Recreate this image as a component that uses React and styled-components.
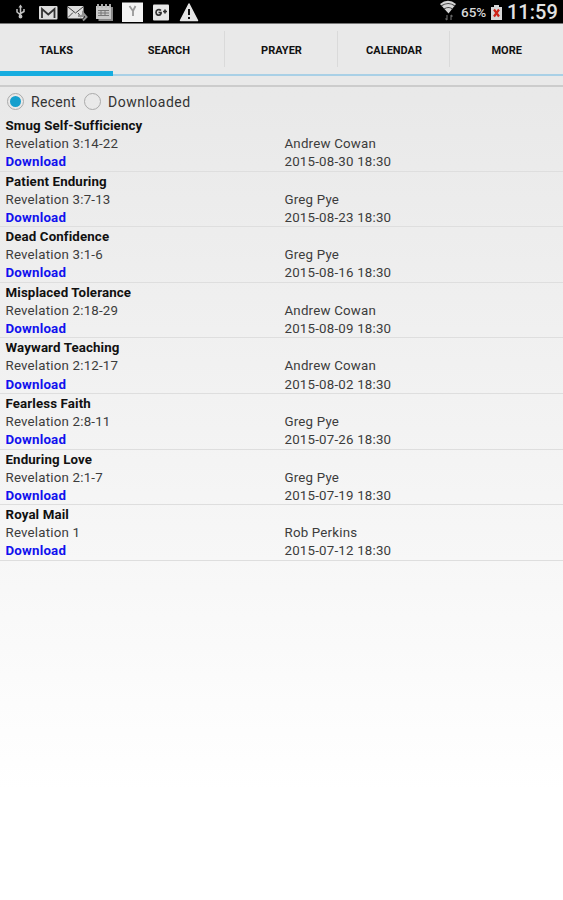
import React from 'react';
import styled, { createGlobalStyle } from 'styled-components';

const GlobalStyle = createGlobalStyle`
* {
  box-sizing: border-box;
}
body {
  margin: 0;
  font-family: Roboto, "Liberation Sans", sans-serif;
  font-variant-ligatures: none;
  background: #ffffff;
}
`;

const Screen = styled.div`
height: 900px;
overflow: hidden;
display: flex;
flex-direction: column;
background: linear-gradient(#e8e8e8 0px, #e9e9e9 100px, #f7f7f7 560px, #ffffff 790px);
`;

const StatusBar = styled.header`
display: flex;
justify-content: space-between;
height: 24px;
flex: none;
background: #000000;
border-bottom: 1px solid #777777;
`;

const StatusGroup = styled.div`
display: flex;
align-items: center;
`;

const StatusIcon = styled.svg`
display: block;
flex: none;
width: ${props => props.$width}px;
height: 24px;
`;

const Battery = styled.span`
width: 29px;
color: #d8d8d8;
font-size: 13.5px;
font-weight: 500;
line-height: 24px;
padding-top: 1px;
`;

const Clock = styled.span`
width: 60px;
padding-left: 4px;
color: #e2e2e2;
font-size: 20px;
font-weight: 500;
line-height: 24px;
`;

const TabBar = styled.nav`
display: flex;
height: 63px;
flex: none;
padding-bottom: 9px;
background: #e9e9e9;
border-bottom: 2px solid #cccccc;
`;

const Tab = styled.div`
flex: 1;
display: flex;
align-items: center;
justify-content: center;
position: relative;
padding-top: 5px;
color: #111111;
font-size: 11px;
font-weight: 700;
border-bottom: ${props => (props.$active ? '5px solid #17ade0' : '2px solid #a9d0e6')};
padding-bottom: ${props => (props.$active ? 0 : 3)}px;

& + &::before {
  content: '';
  position: absolute;
  left: -1px;
  top: 7px;
  width: 1px;
  height: 36px;
  background: #dadada;
}
`;

const Filters = styled.div`
display: flex;
align-items: center;
height: 29px;
flex: none;
padding-left: 7px;
color: #333333;
font-size: 14px;
`;

const Radio = styled.span`
display: flex;
align-items: center;
justify-content: center;
width: 17px;
height: 17px;
border: 1px solid #aaaaaa;
border-radius: 50%;

&::after {
  content: '';
  width: 11px;
  height: 11px;
  border-radius: 50%;
  background: ${props => (props.$checked ? '#149fcd' : 'transparent')};
}
`;

const FilterLabel = styled.span`
width: ${props => props.$width}px;
padding-left: 7px;
letter-spacing: ${props => props.$spacing}px;
white-space: nowrap;
`;

const TalkRow = styled.article`
height: 55.6px;
flex: none;
padding: 1px 0 0 5.5px;
border-bottom: 1px solid #dedede;
color: #3c3c3c;
font-size: 13.3px;
line-height: 18.1px;
`;

const Title = styled.div`
color: #111111;
font-weight: 700;
letter-spacing: 0.12px;
`;

const Line = styled.div`
display: grid;
grid-template-columns: 279px 1fr;
letter-spacing: 0.2px;
`;

const Download = styled.span`
color: #1111ee;
font-weight: 700;
letter-spacing: 0.2px;
`;

const tabs = ['TALKS', 'SEARCH', 'PRAYER', 'CALENDAR', 'MORE'];

const talks = [
  { title: 'Smug Self-Sufficiency', passage: 'Revelation 3:14-22', speaker: 'Andrew Cowan', date: '2015-08-30 18:30' },
  { title: 'Patient Enduring', passage: 'Revelation 3:7-13', speaker: 'Greg Pye', date: '2015-08-23 18:30' },
  { title: 'Dead Confidence', passage: 'Revelation 3:1-6', speaker: 'Greg Pye', date: '2015-08-16 18:30' },
  { title: 'Misplaced Tolerance', passage: 'Revelation 2:18-29', speaker: 'Andrew Cowan', date: '2015-08-09 18:30' },
  { title: 'Wayward Teaching', passage: 'Revelation 2:12-17', speaker: 'Andrew Cowan', date: '2015-08-02 18:30' },
  { title: 'Fearless Faith', passage: 'Revelation 2:8-11', speaker: 'Greg Pye', date: '2015-07-26 18:30' },
  { title: 'Enduring Love', passage: 'Revelation 2:1-7', speaker: 'Greg Pye', date: '2015-07-19 18:30' },
  { title: 'Royal Mail', passage: 'Revelation 1', speaker: 'Rob Perkins', date: '2015-07-12 18:30' },
];

function Notifications() {
  return (
    <StatusIcon $width={210} viewBox="0 0 210 24" fill="none">
      {/* usb */}
      <g stroke="#c4c4c4" strokeWidth="1.5">
        <path d="M20.500 7v10M17 9v3l3.500 3M24 9v2.500l-3.500 2" />
        <circle cx="20.500" cy="16.500" r="1.200" fill="#c4c4c4" />
        <path d="M20.500 4.500l-2 3h4z" fill="#c4c4c4" stroke="none" />
      </g>
      {/* gmail */}
      <rect x="39" y="6" width="18.500" height="13.500" rx="1" fill="#dedede" />
      <path d="M42 18V9l6.300 5.500 6.200-5.500V18" stroke="#333333" strokeWidth="1.800" />
      {/* mail */}
      <rect x="67.500" y="6" width="16" height="12.500" rx="1" fill="#dedede" />
      <path d="M68 7l7.500 6L83 7M68 17.500l5-5M81 17l-3-4" stroke="#444444" />
      <path d="M78 16h5v-3l3.500 4-3.500 3.500M84 14l-4 3" stroke="#929292" strokeWidth="2" />
      {/* calendar */}
      <path d="M98.500 7h14.500v14H98.500z" fill="#888888" />
      <path d="M96 6h15v13H96z" fill="#c9c9c9" />
      <path d="M98 4v4M102 4v4M106 4v4M110 4v4" stroke="#bbbbbb" strokeWidth="1.800" />
      <path d="M98 10.500h11M98 13h11M98 15.500h11M101 10v6M105 10v6" stroke="#777777" />
      {/* app */}
      <path d="M122 2.500h21V22h-21z" fill="#f3f3f3" />
      <path d="M129.500 6l3.500 5 2.500-5M133 11v5" stroke="#999999" strokeWidth="1.800" />
      {/* google plus */}
      <rect x="153" y="4.500" width="16" height="16" rx="1" fill="#e8e8e8" />
      <path d="M161 10.500c-2-2-5-.5-5 2s3.500 4 5 1v-1h-2.500M163 11.500h4M165 9.500v4" stroke="#333333" strokeWidth="1.700" />
      {/* warning */}
      <path d="M189 4l8.500 16.500h-17z" fill="#e5e5e5" stroke="#e5e5e5" strokeWidth="1.500" strokeLinejoin="round" />
      <path d="M189 9v6M189 17v2" stroke="#111111" strokeWidth="2" />
    </StatusIcon>
  );
}

function WifiIcon() {
  return (
    <StatusIcon $width={21} viewBox="0 0 21 24" fill="none">
      <path d="M0 4q8-6.500 16 0L8.500 13.500z" fill="#d6d6d6" />
      <path d="M1 6q7.500-5 14 0M4 9q4.500-3 8.500 0" stroke="#444444" strokeWidth="1.100" />
      <path d="M7 15v5M5.500 18.500L7 20M11 20v-5M11 15l1.500 1.500" stroke="#666666" strokeWidth="1.200" />
    </StatusIcon>
  );
}

function BatteryIcon() {
  return (
    <StatusIcon $width={13} viewBox="0 0 13 24" fill="none">
      <path d="M1 7h3V5h5v2h3v13H1z" fill="#d8d8d8" />
      <path d="M4 9.500l5 7M9 9.500l-5 7" stroke="#cf2519" strokeWidth="2.200" />
    </StatusIcon>
  );
}

export default function App() {
  return (
    <Screen>
      <GlobalStyle />
      <StatusBar>
        <Notifications />
        <StatusGroup>
          <WifiIcon />
          <Battery>65%</Battery>
          <BatteryIcon />
          <Clock>11:59</Clock>
        </StatusGroup>
      </StatusBar>
      <TabBar>
        {tabs.map((tab, i) => (
          <Tab key={tab} $active={i === 0}>{tab}</Tab>
        ))}
      </TabBar>
      <Filters>
        <Radio $checked />
        <FilterLabel $width={60} $spacing={0.3}>Recent</FilterLabel>
        <Radio />
        <FilterLabel $width={100} $spacing={0.5}>Downloaded</FilterLabel>
      </Filters>
      {talks.map(talk => (
        <TalkRow key={talk.date}>
          <Title>{talk.title}</Title>
          <Line>
            <span>{talk.passage}</span>
            <span>{talk.speaker}</span>
          </Line>
          <Line>
            <Download>Download</Download>
            <span>{talk.date}</span>
          </Line>
        </TalkRow>
      ))}
    </Screen>
  );
}
